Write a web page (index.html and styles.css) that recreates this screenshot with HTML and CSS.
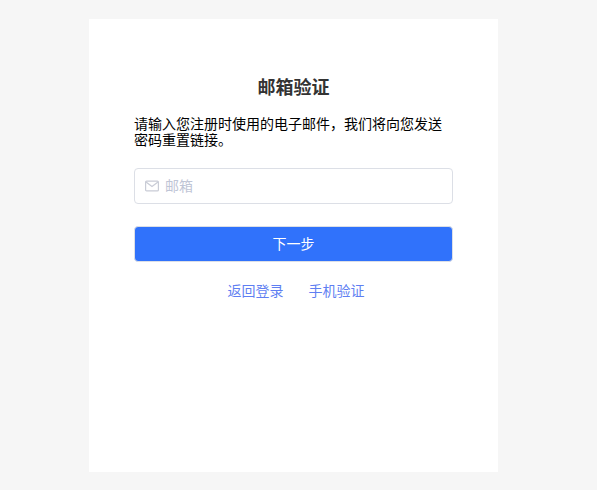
FILE: index.html
```html
<!DOCTYPE html>
<html lang="zh-CN">
<head>
  <meta charset="UTF-8">
  <meta name="viewport" content="width=device-width, initial-scale=1.0">
  <title>邮箱验证</title>
  <link rel="stylesheet" href="styles.css">
</head>
<body>
  <div class="card">
    <h1 class="title">邮箱验证</h1>
    <p class="hint">请输入您注册时使用的电子邮件，我们将向您发送密码重置链接。</p>

    <!-- 邮箱输入框 -->
    <label class="field">
      <svg class="field-icon" width="14" height="12" viewBox="0 0 14 12" fill="none" stroke="#c9ccd6" stroke-width="1.2">
        <rect x="0.6" y="1.1" width="12.8" height="9.8" rx="1"/>
        <path d="M1 2l6 4.6L13 2"/>
      </svg>
      <input class="field-input" type="text" placeholder="邮箱">
    </label>

    <button class="next-button">下一步</button>

    <div class="links">
      <a href="#">返回登录</a>
      <a href="#">手机验证</a>
    </div>
  </div>
</body>
</html>
```

FILE: styles.css
```css
* {
  margin: 0;
  padding: 0;
  box-sizing: border-box;
}

body {
  font-family: "Noto Sans CJK SC", "Liberation Sans", sans-serif;
  background-color: #f6f6f6;
  height: 490px;
  overflow: hidden;
  padding: 19px 99px 18px 89px;
}

.card {
  background-color: white;
  width: 409px;
  height: 453px;
  padding: 55px 45px 0;
}

.title {
  font-size: 18px;
  font-weight: 700;
  line-height: 24px;
  color: #333;
  text-align: center;
  margin-bottom: 17px;
}

.hint {
  font-size: 14px;
  line-height: 16px;
  color: #000;
  margin-bottom: 21px;
}

.field {
  display: flex;
  align-items: center;
  height: 36px;
  width: 319px;
  padding: 0 10px;
  border: 1px solid #dcdfe6;
  border-radius: 4px;
  margin-bottom: 22px;
}

.field-icon {
  flex-shrink: 0;
  margin-right: 6px;
}

.field-input {
  flex: 1;
  min-width: 0;
  border: none;
  outline: none;
  font-family: inherit;
  font-size: 14px;
  padding-bottom: 2px;
}

.field-input::placeholder {
  color: #bfc5d6;
  opacity: 1;
}

.next-button {
  display: block;
  width: 319px;
  height: 36px;
  background-color: #3072fb;
  color: white;
  border: 1px solid #dcdfe6;
  border-radius: 4px;
  font-family: inherit;
  font-size: 14px;
  padding-bottom: 2px;
  margin-bottom: 18px;
  cursor: pointer;
}

.links {
  display: flex;
  justify-content: center;
  gap: 25px;
  width: 319px;
  padding-left: 5px;
  font-size: 14px;
  line-height: 20px;
}

.links a {
  color: #5f7ff2;
  text-decoration: none;
}
```
